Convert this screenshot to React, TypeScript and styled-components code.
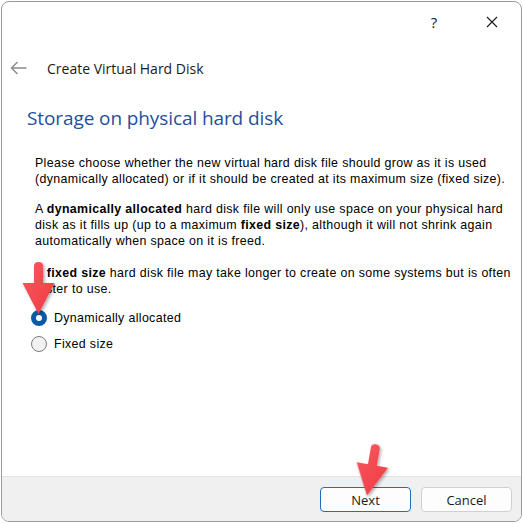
import React from "react";
import styled, { createGlobalStyle } from "styled-components";

const Global = createGlobalStyle`
  html, body { margin: 0; padding: 0; background: #ffffff; }
  body { width: 523px; height: 524px; overflow: hidden; }
  * { box-sizing: border-box; }
`;

const Window = styled.div`
  position: relative;
  margin: 1px 0 0 1px;
  width: 521px;
  height: 521px;
  border: 1px solid #9a9a9a;
  border-radius: 8px;
  overflow: hidden;
  background: #ffffff;
  display: flex;
  flex-direction: column;
  font-family: "Open Sans", "Noto Sans", sans-serif;
`;

const TitleBar = styled.div`
  height: 39px;
  display: flex;
  justify-content: flex-end;
  align-items: center;
  flex-shrink: 0;
`;

const CaptionButton = styled.div`
  width: 58px;
  height: 39px;
  display: flex;
  align-items: center;
  justify-content: center;
  color: #1a1a1a;
  font-size: 15px;
`;

const Header = styled.div`
  height: 54px;
  display: flex;
  align-items: center;
  padding-left: 8px;
  gap: 20px;
  flex-shrink: 0;
`;

const HeaderTitle = styled.div`
  font-family: "Open Sans", "Noto Sans", sans-serif;
  font-size: 14px;
  color: #1a1a1a;
`;

const Content = styled.div`
  flex: 1;
  padding: 9px 0 0 25px;
  display: flex;
  flex-direction: column;
`;

const Heading = styled.h1`
  margin: 0;
  font-family: "Open Sans", "Noto Sans", sans-serif;
  font-weight: 400;
  font-size: 19px;
  line-height: 28px;
  color: #1f4fa0;
  letter-spacing: -0.1px;
`;

const Body = styled.div`
  padding: 23px 8px 0 8px;
  display: flex;
  flex-direction: column;
  gap: 14px;
  font-family: "Liberation Sans", Arial, sans-serif;
  font-size: 12.4px;
  line-height: 16px;
  letter-spacing: 0.35px;
  color: #000000;
`;

const Para = styled.p<{ $gap?: number }>`
  margin: 0;
  margin-top: ${(p) => p.$gap ?? 0}px;
`;

const Options = styled.div`
  display: flex;
  flex-direction: column;
  gap: 10px;
  margin-top: 13px;
  font-family: "Liberation Sans", Arial, sans-serif;
  font-size: 12.4px;
  letter-spacing: 0.35px;
  color: #000000;
`;

const OptionRow = styled.label`
  display: flex;
  align-items: center;
  gap: 7px;
  height: 16px;
  padding-left: 4px;
`;

const RadioDot = styled.span<{ $checked?: boolean }>`
  width: 16px;
  height: 16px;
  border-radius: 50%;
  flex-shrink: 0;
  background: ${(p) => (p.$checked ? "#ffffff" : "#f2f2f2")};
  border: ${(p) => (p.$checked ? "5px solid #0c5aa6" : "1px solid #7e7e7e")};
`;

const Footer = styled.div`
  height: 45px;
  flex-shrink: 0;
  border-top: 1px solid #e3e3e3;
  background: #f0f0f0;
  display: flex;
  justify-content: flex-end;
  align-items: flex-start;
  padding: 10px 9px 0 0;
  gap: 10px;
`;

const Button = styled.button<{ $focused?: boolean }>`
  width: 91px;
  height: 25px;
  border-radius: 4px;
  background: #fdfdfd;
  border: 1px solid ${(p) => (p.$focused ? "#1f6fc0" : "#d0d0d0")};
  font-family: "Open Sans", "Noto Sans", sans-serif;
  font-size: 13px;
  color: #1a1a1a;
  padding: 0;
`;

const Callout = styled.svg<{ $left: number; $top: number }>`
  position: absolute;
  left: ${(p) => p.$left}px;
  top: ${(p) => p.$top}px;
  overflow: visible;
  pointer-events: none;
`;

function RedArrow({ left, top, rotate }: { left: number; top: number; rotate: number }) {
  const id = `sh${left}`;
  return (
    <Callout $left={left} $top={top} width="36" height="60" viewBox="0 0 36 60">
      <defs>
        <filter id={id} x="-40%" y="-40%" width="180%" height="180%">
          <feDropShadow dx="1.5" dy="1.5" stdDeviation="1.5" floodColor="#000" floodOpacity="0.35" />
        </filter>
        <linearGradient id={id + "g"} x1="0" y1="0" x2="1" y2="1">
          <stop offset="0" stopColor="#f75a60" />
          <stop offset="1" stopColor="#ef3a42" />
        </linearGradient>
      </defs>
      <g transform={`rotate(${rotate} 18 30)`} filter={`url(#${id})`}>
        <path
          d="M13 8 Q13 4 17.5 4 Q22 4 22 8 L22 25 L33.5 25 L17.5 56 L1.5 25 L13 25 Z"
          fill={`url(#${id}g)`}
        />
      </g>
    </Callout>
  );
}

export default function App() {
  return (
    <>
      <Global />
      <Window>
        <TitleBar>
          <CaptionButton>?</CaptionButton>
          <CaptionButton>
            <svg width="12" height="12" viewBox="0 0 12 12">
              <path d="M1 1 L11 11 M11 1 L1 11" stroke="#1a1a1a" strokeWidth="1.1" />
            </svg>
          </CaptionButton>
        </TitleBar>
        <Header>
          <svg width="17" height="14" viewBox="0 0 17 14">
            <path d="M16.5 7 H1.5 M7.5 1 L1.5 7 L7.5 13" stroke="#8a8a8a" strokeWidth="1.4" fill="none" />
          </svg>
          <HeaderTitle>Create Virtual Hard Disk</HeaderTitle>
        </Header>
        <Content>
          <Heading>Storage on physical hard disk</Heading>
          <Body>
            <Para>
              Please choose whether the new virtual hard disk file should grow as it is used
              (dynamically allocated) or if it should be created at its maximum size (fixed size).
            </Para>
            <Para>
              A <b>dynamically allocated</b> hard disk file will only use space on your physical hard
              disk as it fills up (up to a maximum <b>fixed size</b>), although it will not shrink again
              automatically when space on it is freed.
            </Para>
            <Para $gap={2}>
              A <b>fixed size</b> hard disk file may take longer to create on some systems but is often
              faster to use.
            </Para>
          </Body>
          <Options>
            <OptionRow>
              <RadioDot $checked />
              <span>Dynamically allocated</span>
            </OptionRow>
            <OptionRow>
              <RadioDot />
              <span>Fixed size</span>
            </OptionRow>
          </Options>
        </Content>
        <Footer>
          <Button $focused>Next</Button>
          <Button>Cancel</Button>
        </Footer>
        <RedArrow left={19} top={256} rotate={0} />
        <RedArrow left={352} top={438} rotate={10} />
      </Window>
    </>
  );
}
